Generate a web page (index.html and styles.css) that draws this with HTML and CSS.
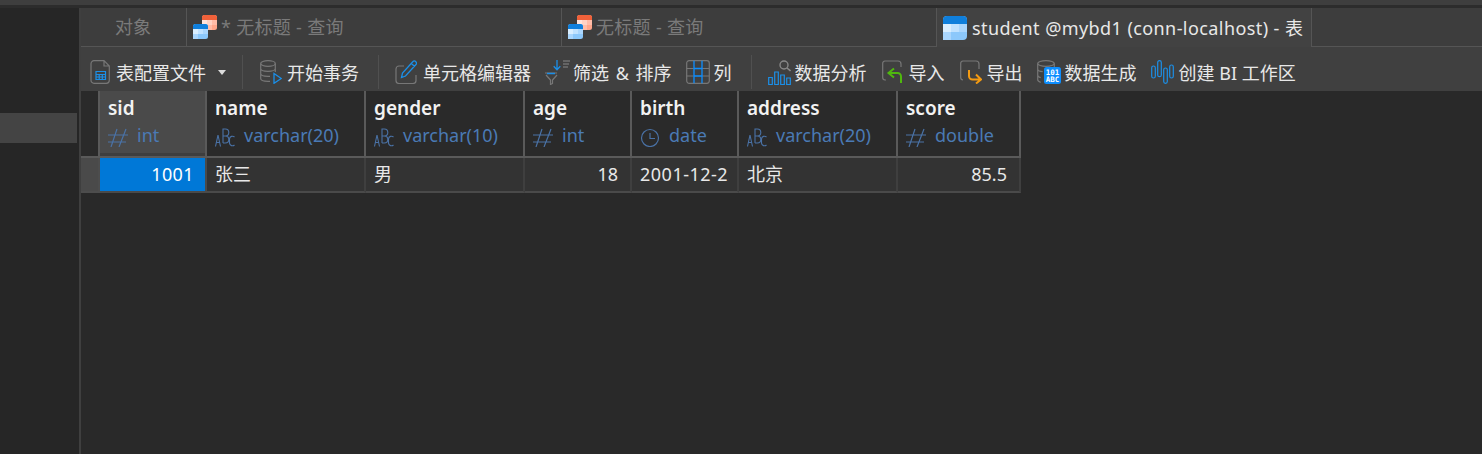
FILE: index.html
```html
<!DOCTYPE html>
<html lang="zh">
<head>
<meta charset="utf-8">
<title>student @mybd1</title>
<link rel="stylesheet" href="styles.css">
</head>
<body>
<svg class="defs" width="0" height="0" aria-hidden="true">
  <defs>
    <symbol id="tbl-orange" viewBox="0 0 15 15">
      <rect width="15" height="15" rx="2.5" fill="#ffa78c"/>
      <path d="M2.5 0h10A2.5 2.5 0 0 1 15 2.500V5H0V2.500A2.500 2.500 0 0 1 2.500 0z" fill="#f0613a"/>
      <path d="M5 5h5v5H5z" fill="#ffd2c4"/><path d="M0 5h5v5H0z" fill="#ffe3da"/><path d="M10 5h5v5h-5zM5 10h5v5H5z" fill="#ffbca8"/>
    </symbol>
    <symbol id="tbl-blue" viewBox="0 0 15 15">
      <rect width="15" height="15" rx="2.500" fill="#8cc8fb"/>
      <path d="M2.500 0h10A2.500 2.500 0 0 1 15 2.500V5H0V2.500A2.500 2.500 0 0 1 2.500 0z" fill="#0f7fdc"/>
      <path d="M0 5h5v5H0z" fill="#d9eeff"/><path d="M5 5h5v5H5z" fill="#c0e2ff"/><path d="M10 5h5v5h-5zM0 10h5v5H0z" fill="#aad6fd"/>
    </symbol>
    <symbol id="hash" viewBox="0 0 20 20">
      <path d="M0 8h20M0 15h18M9 2 3 20M18 2l-7 18" fill="none" stroke="#4a72a6" stroke-width="1.200"/>
    </symbol>
    <symbol id="abc" viewBox="0 0 20 20">
      <g fill="none" stroke="#4a72a6" stroke-width="1.100">
        <path d="M.5 19.500 3 8l2.500 11.500M1.300 15.500h3.400"/>
        <path d="M8 16V2h2.300a3 3 0 0 1 0 7H8m2.300 0a3.500 3.500 0 0 1 0 7H8"/>
        <path d="M19.500 10a3 3 0 0 0-5 1.800v4.400a3 3 0 0 0 5 1.800"/>
      </g>
    </symbol>
    <symbol id="clock" viewBox="0 0 20 20">
      <circle cx="10" cy="11" r="8.500" fill="none" stroke="#4a72a6" stroke-width="1.200"/>
      <path d="M10 6v5.500h5" fill="none" stroke="#4a72a6" stroke-width="1.200"/>
    </symbol>
  </defs>
</svg>

<div class="topstrip"></div>
<div class="app">
  <aside class="sidebar"><div class="side-selected"></div></aside>
  <main class="content">
    <nav class="tabs">
      <div class="tab tab-objects">对象</div>
      <div class="tab tab-query">
        <svg class="ico-query" viewBox="0 0 24 24"><use href="#tbl-orange" x="9" y="0" width="15" height="15"/><use href="#tbl-blue" x="0" y="9" width="15" height="15"/></svg>
        <span>* 无标题 - 查询</span>
      </div>
      <div class="tab tab-query">
        <svg class="ico-query" viewBox="0 0 24 24"><use href="#tbl-orange" x="9" y="0" width="15" height="15"/><use href="#tbl-blue" x="0" y="9" width="15" height="15"/></svg>
        <span>无标题 - 查询</span>
      </div>
      <div class="tab tab-active">
        <svg class="ico-table" viewBox="0 0 15 15"><use href="#tbl-blue" width="15" height="15"/></svg>
        <span>student @mybd1 (conn-localhost) - 表</span>
      </div>
    </nav>

    <div class="toolbar">
      <div class="tool tool-profile">
        <svg class="ico" width="20" height="24" viewBox="0 0 20 24"><path d="M4 .7h10l5.300 5.300v14.300a3 3 0 0 1-3 3H4a3 3 0 0 1-3-3v-16.600a3 3 0 0 1 3-3zM14 .7V6h5.300" fill="none" stroke="#777" stroke-width="1.200"/><path d="M6 11.500h9.500v8H6zM6 14.500h9.500M6 17h9.500M9.200 14.500v5M12.300 14.500v5" fill="none" stroke="#1b8fe8" stroke-width="1.200"/></svg>
        <span>表配置文件</span>
        <i class="caret"></i>
      </div>
      <div class="sep sep-a"></div>
      <div class="tool tool-begin">
        <svg class="ico" width="22" height="24" viewBox="0 0 22 24"><g fill="none" stroke="#777" stroke-width="1.200"><ellipse cx="8" cy="3.500" rx="7.300" ry="2.800"/><path d="M.7 3.500v15c0 1.600 3.300 2.800 7.300 2.800h2M15.300 3.500V12M.7 8.500c0 1.600 3.300 2.800 7.300 2.800s7.300-1.200 7.300-2.800M.7 13.500c0 1.600 3.300 2.800 7.300 2.800h2"/></g><path d="M14 13.500 21.300 18.500 14 23.300z" fill="none" stroke="#1b8fe8" stroke-width="1.300"/></svg>
        <span>开始事务</span>
      </div>
      <div class="sep sep-b"></div>
      <div class="tool tool-cell">
        <svg class="ico" width="22" height="24" viewBox="0 0 22 24"><path d="M9 6H4a3 3 0 0 0-3 3v11.500a3 3 0 0 0 3 3h14a3 3 0 0 0 3-3V15" fill="none" stroke="#777" stroke-width="1.200"/><path d="M6.500 17.500 7.500 13 18 1.500a1.800 1.800 0 0 1 2.600 0l.4.500a1.800 1.800 0 0 1 0 2.500L10.500 16zM16.500 3.500l3 3" fill="none" stroke="#1b8fe8" stroke-width="1.300"/></svg>
        <span>单元格编辑器</span>
      </div>
      <div class="tool tool-filter">
        <svg class="ico" width="25" height="25" viewBox="0 0 25 25"><path d="M0 13h12M1 15l4.500 5v4.500l2-1V20L12 15" fill="none" stroke="#777" stroke-width="1.200"/><path d="M2 13.500h8" stroke="#1b8fe8" stroke-width="1.500"/><path d="M12 0v9M8.700 6.300 12 9.700l3.300-3.400" fill="none" stroke="#1b8fe8" stroke-width="1.300"/><path d="M18 1h7M18 4h6M18 7h5" stroke="#888" stroke-width="1.100"/></svg>
        <span>筛选 &amp; 排序</span>
      </div>
      <div class="tool tool-cols">
        <svg class="ico" width="24" height="24" viewBox="0 0 24 24"><rect x=".7" y=".7" width="22.600" height="22.600" rx="2.500" fill="none" stroke="#777" stroke-width="1.200"/><path d="M.7 8.500h7M16 8.500h7M.7 16h7M16 16h7" stroke="#777" stroke-width="1.200"/><path d="M8 .7v22.600M16 .7v22.600M8 8.500h8M8 16h8" fill="none" stroke="#0d8eff" stroke-width="1.300"/></svg>
        <span>列</span>
      </div>
      <div class="sep sep-c"></div>
      <div class="tool tool-analysis">
        <svg class="ico" width="23" height="25" viewBox="0 0 23 25"><path d="M.7 17.500h3.600v7H.7zM6.700 12h3.600v12.500H6.700zM12.700 15h3.600v9.500h-3.600zM18.700 18h3.600v6.500h-3.600z" fill="none" stroke="#1b8fe8" stroke-width="1.200"/><circle cx="16" cy="5" r="4" fill="none" stroke="#888" stroke-width="1.400"/><path d="m19 8 3.500 3" stroke="#888" stroke-width="1.600"/></svg>
        <span>数据分析</span>
      </div>
      <div class="tool tool-import">
        <svg class="ico" width="22" height="24" viewBox="0 0 22 24"><path d="M4 20H3a2.500 2.500 0 0 1-2.300-2.500V3.500A2.500 2.500 0 0 1 3 1h13a3 3 0 0 1 3 3v3" fill="none" stroke="#777" stroke-width="1.200"/><path d="M12 8.500 6.500 13l5.500 4.500M7 13h8.500a3.500 3.500 0 0 1 3.500 3.500V23" fill="none" stroke="#4fb80e" stroke-width="2"/></svg>
        <span>导入</span>
      </div>
      <div class="tool tool-export">
        <svg class="ico" width="22" height="24" viewBox="0 0 22 24"><path d="M3 20a2.500 2.500 0 0 1-2.300-2.500V3.500A2.500 2.500 0 0 1 3 1h13a3 3 0 0 1 3 3v5" fill="none" stroke="#777" stroke-width="1.200"/><path d="M9 10v6a3.500 3.500 0 0 0 3.500 3.500H21M16 14.500l5 5-5 4" fill="none" stroke="#f39a12" stroke-width="2"/></svg>
        <span>导出</span>
      </div>
      <div class="tool tool-gen">
        <svg class="ico-gen" viewBox="0 0 24 24" width="24" height="24"><g fill="none" stroke="#777" stroke-width="1.200"><ellipse cx="9" cy="3.500" rx="8.300" ry="2.800"/><path d="M.7 3.500v16c0 1.500 1 2.300 3 2.800M17.300 3.500V7M.7 9c0 1.500 2.500 2.500 5 2.700M.7 15c0 1.300 1.500 2.200 3 2.600"/></g><rect class="gen-bg" x="7" y="7" width="17" height="17" rx="2.500"/><text class="gen-text" x="15.500" y="14.500">101</text><text class="gen-text" x="15.500" y="22">ABC</text></svg>
        <span>数据生成</span>
      </div>
      <div class="tool tool-bi">
        <svg class="ico" width="23" height="24" viewBox="0 0 23 24"><g fill="none" stroke="#1b8fe8" stroke-width="1.200"><rect x=".7" y="6" width="3.600" height="12" rx="1.800"/><rect x="6.700" y=".7" width="3.600" height="16" rx="1.800"/><rect x="12.700" y="8" width="3.600" height="15.300" rx="1.800"/><rect x="18.700" y="5" width="3.600" height="13" rx="1.800"/></g></svg>
        <span>创建 BI 工作区</span>
      </div>
    </div>

    <section class="grid">
      <div class="corner"></div>
      <div class="hcell hcell-active"><b>sid</b><div class="type"><svg class="tico"><use href="#hash"/></svg><span>int</span></div></div>
      <div class="hcell"><b>name</b><div class="type"><svg class="tico"><use href="#abc"/></svg><span>varchar(20)</span></div></div>
      <div class="hcell"><b>gender</b><div class="type"><svg class="tico"><use href="#abc"/></svg><span>varchar(10)</span></div></div>
      <div class="hcell"><b>age</b><div class="type"><svg class="tico"><use href="#hash"/></svg><span>int</span></div></div>
      <div class="hcell"><b>birth</b><div class="type"><svg class="tico"><use href="#clock"/></svg><span>date</span></div></div>
      <div class="hcell"><b>address</b><div class="type"><svg class="tico"><use href="#abc"/></svg><span>varchar(20)</span></div></div>
      <div class="hcell"><b>score</b><div class="type"><svg class="tico"><use href="#hash"/></svg><span>double</span></div></div>

      <div class="rowhead"></div>
      <div class="cell num selected">1001</div>
      <div class="cell">张三</div>
      <div class="cell">男</div>
      <div class="cell num">18</div>
      <div class="cell"><span class="clip">2001-12-25</span></div>
      <div class="cell">北京</div>
      <div class="cell num">85.5</div>
    </section>
  </main>
</div>
</body>
</html>
```

FILE: styles.css
```css
* { box-sizing: border-box; }

html, body {
  margin: 0;
  height: 100%;
  overflow: hidden;
}

body {
  background: #292929;
  color: #e8e8e8;
  font-family: "Noto Sans", "Noto Sans CJK SC", sans-serif;
  font-size: 18px;
  display: flex;
  flex-direction: column;
}

.defs { position: absolute; }

.topstrip {
  height: 8px;
  flex: none;
  background: #3e3e3e;
  border-bottom: 3px solid #2c2c2c;
}

.app {
  flex: 1;
  display: flex;
  min-height: 0;
}

.sidebar {
  width: 81px;
  flex: none;
  background: #262626;
  border-right: 2px solid #3f3f3f;
  padding-top: 105px;
}

.side-selected {
  height: 30px;
  width: 77px;
  background: #444;
}

.content {
  flex: 1;
  display: flex;
  flex-direction: column;
  min-width: 0;
}

/* tabs */
.tabs {
  height: 39px;
  flex: none;
  display: flex;
  background: #3d3d3d;
  border-bottom: 1px solid #555;
}

.tab {
  width: 375px;
  display: flex;
  align-items: center;
  line-height: 38px;
  white-space: nowrap;
  color: #7a7a7a;
  border-right: 1px solid #555;
  overflow: hidden;
}

.tab-objects {
  width: 106px;
  padding-left: 34px;
}

.tab-query { padding-left: 6px; gap: 4px; letter-spacing: .3px; }

.ico-query { width: 24px; height: 24px; flex: none; }

.tab-active {
  background: #424242;
  color: #e8e8e8;
  padding-left: 6px;
  gap: 5px;
  height: 39px;
  margin-bottom: -1px;
  letter-spacing: .42px;
}

.ico-table { width: 24px; height: 24px; flex: none; }

/* toolbar */
.toolbar {
  height: 44px;
  flex: none;
  display: flex;
  align-items: center;
  background: #404040;
  padding: 6px 0 0 9px;
  white-space: nowrap;
}

.tool {
  display: flex;
  align-items: center;
  gap: 5px;
  margin-right: 14px;
}

.ico, .ico-gen { flex: none; }

.tool-profile { gap: 6px; margin-right: 0; }
.tool-begin { margin-right: 0; }
.tool-cell { gap: 6px; }
.tool-filter { gap: 3px; word-spacing: 2px; }
.tool-cols { gap: 4px; margin-right: 0; }
.tool-analysis { gap: 4px; margin-right: 15px; }
.tool-import { margin-right: 15px; }
.tool-gen { gap: 4px; }

.caret {
  width: 0;
  height: 0;
  margin-left: 6px;
  border-left: 4.500px solid transparent;
  border-right: 4.500px solid transparent;
  border-top: 5px solid #ddd;
}

.sep {
  width: 1px;
  height: 34px;
  background: #505050;
}
.sep-a { margin: 0 17px 0 16px; }
.sep-b { margin: 0 16px 0 19px; }
.sep-c { margin: 0 16px 0 19px; }

.gen-bg { fill: #0d8eff; }
.gen-text {
  font-family: "DejaVu Sans Mono", monospace;
  font-size: 7.500px;
  font-weight: 700;
  fill: #fff;
  text-anchor: middle;
}

/* data grid */
.grid {
  display: grid;
  grid-template-columns: 19px 107px 159px 159px 107px 107px 159px 123px;
  grid-template-rows: 67px 35px;
  width: 940px;
}

.corner,
.hcell {
  background: #2a2a2a;
  border-right: 2px solid #5a5a5a;
  border-bottom: 2px solid #5a5a5a;
}

.hcell {
  padding: 4px 8px 0 8px;
  line-height: 26px;
}

.hcell b {
  display: block;
  font-size: 19px;
  font-weight: 600;
  color: #f2f2f2;
}

.hcell-active {
  background: #4a4a4a;
  box-shadow: inset 0 -3px 0 #3e3e3e;
}

.type {
  display: flex;
  align-items: center;
  gap: 9px;
  margin-top: 1px;
  color: #4a7ab5;
}

.tico {
  width: 20px;
  height: 20px;
  flex: none;
  margin-top: 4px;
}

.rowhead {
  background: #4a4a4a;
  border-right: 2px solid #4d4d4d;
  border-bottom: 2px solid #4d4d4d;
}

.cell {
  background: #333;
  border-right: 2px solid #3f3f3f;
  border-bottom: 2px solid #4a4a4a;
  padding: 0 8px;
  line-height: 33px;
  white-space: nowrap;
  color: #e8e8e8;
}

.num { text-align: right; padding-right: 12px; }

.clip {
  display: block;
  overflow: hidden;
  letter-spacing: .5px;
}

.selected {
  background: #0078d7;
  color: #fff;
  padding-right: 11px;
  letter-spacing: .4px;
  border-right-color: #4a4a4a;
}
```
